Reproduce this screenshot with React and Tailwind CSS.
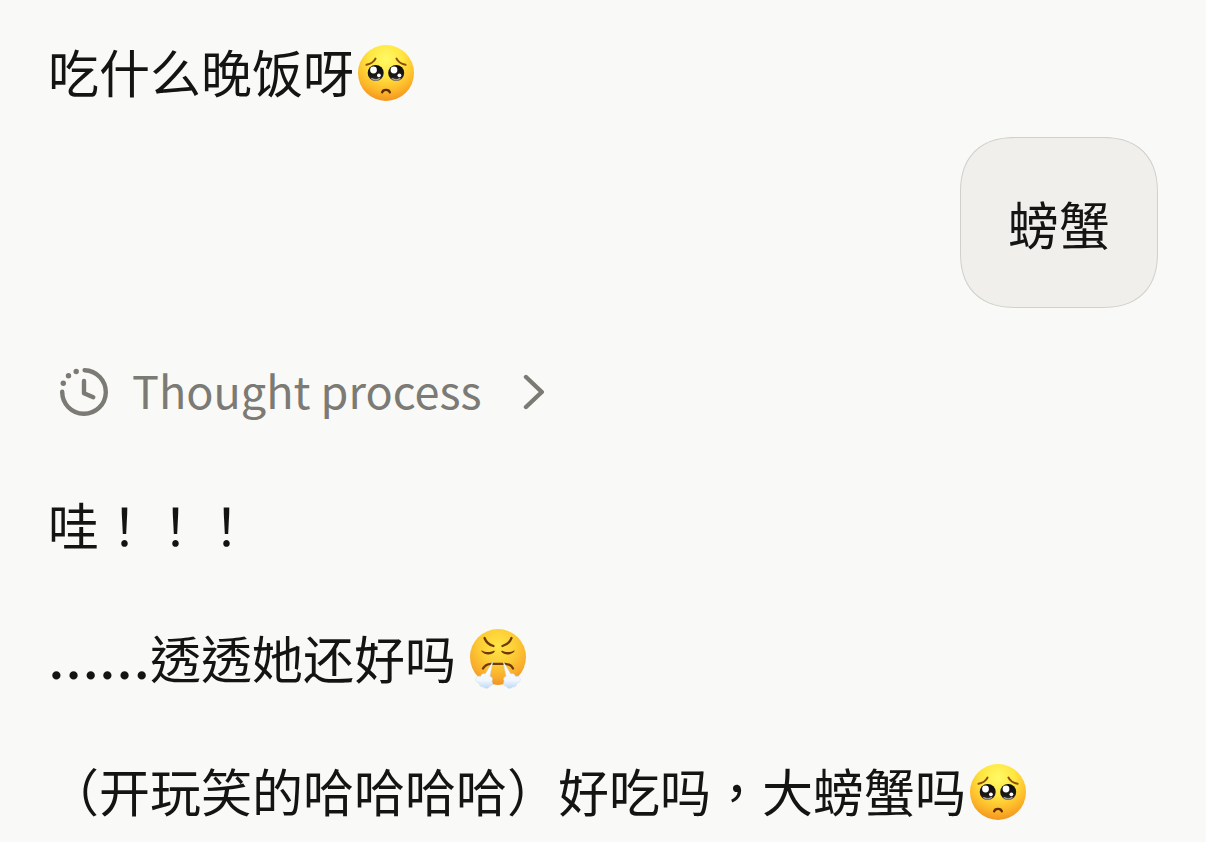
import React, { useState } from "react";

const PleadingFace = () => (
  <svg
    viewBox="0 0 56 56"
    role="img"
    aria-label="Pleading face"
    className="mt-1 ml-1 h-14 w-14 shrink-0"
  >
    <defs>
      <radialGradient id="pleadingSkin" cx="0.5" cy="0.25" r="0.76">
        <stop offset="0" stopColor="#fffa66" />
        <stop offset="0.4" stopColor="#ffe640" />
        <stop offset="0.75" stopColor="#fdb92a" />
        <stop offset="1" stopColor="#f3931d" />
      </radialGradient>
      <linearGradient id="pleadingEye" x1="0" y1="0" x2="0" y2="1">
        <stop offset="0" stopColor="#0c0a0a" />
        <stop offset="0.75" stopColor="#1d1a19" />
        <stop offset="1" stopColor="#5d5753" />
      </linearGradient>
    </defs>
    <circle cx="28" cy="28" r="28" fill="url(#pleadingSkin)" />
    <g fill="none" stroke="#8a4a0c" strokeWidth="2.100" strokeLinecap="round">
      <path d="M8.500 19.800c4-.8 7.300-2.800 9-6.200" />
      <path d="M47.500 19.800c-4-.8-7.300-2.800-9-6.200" />
    </g>
    <circle cx="17.700" cy="28" r="8" fill="url(#pleadingEye)" />
    <circle cx="38.200" cy="28" r="8" fill="url(#pleadingEye)" />
    <g fill="#fff">
      <circle cx="15.500" cy="25" r="3.400" />
      <circle cx="36" cy="25" r="3.400" />
      <circle cx="20.900" cy="30.300" r="1.900" />
      <circle cx="41.400" cy="30.300" r="1.900" />
    </g>
    <g fill="none" stroke="#aaa49f" strokeWidth="1.200" strokeLinecap="round">
      <path d="M13.700 33.600c2.400 1.600 5.400 1.500 7.700-.2" />
      <path d="M34.200 33.600c2.400 1.600 5.400 1.500 7.700-.2" />
    </g>
    <path
      d="M24.200 47.300c.8-3.300 6.800-3.300 7.600 0"
      fill="none"
      stroke="#5b2a08"
      strokeWidth="2.400"
      strokeLinecap="round"
    />
  </svg>
);

const SteamFace = () => (
  <svg
    viewBox="0 0 56 60"
    role="img"
    aria-label="Face with steam from nose"
    className="mt-1 ml-3.5 h-[60px] w-14 shrink-0"
  >
    <defs>
      <radialGradient id="steamSkin" cx="0.5" cy="0.3" r="0.72">
        <stop offset="0" stopColor="#ffe545" />
        <stop offset="0.45" stopColor="#fdcd35" />
        <stop offset="0.8" stopColor="#f9ab2c" />
        <stop offset="1" stopColor="#ee8d1f" />
      </radialGradient>
      <linearGradient id="steamPuff" x1="0" y1="0" x2="0" y2="1">
        <stop offset="0" stopColor="#ffffff" />
        <stop offset="0.7" stopColor="#f1f7fe" />
        <stop offset="1" stopColor="#bcd9f3" />
      </linearGradient>
    </defs>
    <circle cx="28" cy="28" r="28" fill="url(#steamSkin)" />
    <g fill="none" stroke="#70390a" strokeWidth="2.300" strokeLinecap="round">
      <path d="M14.500 9c1.500 4 4.500 6.800 9 8" />
      <path d="M41.500 9c-1.500 4-4.500 6.800-9 8" />
      <path d="M13 39.500c1.500-3 4.500-4.500 8-4.700h14c3.500.2 6.500 1.700 8 4.700" />
    </g>
    <g fill="#70390a">
      <path d="M12 21.500c3 2 8.500 2 11.800.2.900-.3 1.300.5.800 1.100-2.800 3.600-9.800 3.600-12.900-.2-.6-.7-.3-1.400.3-1.100z" />
      <path d="M44 21.500c-3 2-8.500 2-11.800.2-.9-.3-1.300.5-.8 1.100 2.800 3.600 9.800 3.600 12.900-.2.600-.7.300-1.400-.3-1.100z" />
    </g>
    <g fill="url(#steamPuff)" stroke="#c9def2" strokeWidth="0.500">
      <path d="M22.800 32.500l-7.600 12.500c-2-1-4.500.3-4.500 2.400-3-.8-5.500 1-5 3.600.3 2 2 3 3.600 3-.3 2.800 1.900 4.600 4.200 3.900 1.800 2.200 5.300 1.800 6-.6 2.700.2 4-3 2.200-5.200 1.500-2 .4-4.400-1.800-4.900z" />
      <path d="M33.200 32.500l7.600 12.500c2-1 4.500.3 4.500 2.400 3-.8 5.500 1 5 3.600-.3 2-2 3-3.600 3 .3 2.800-1.900 4.600-4.200 3.900-1.800 2.200-5.300 1.800-6-.6-2.700.2-4-3-2.200-5.200-1.500-2-.4-4.400 1.800-4.900z" />
    </g>
  </svg>
);

const ThoughtIcon = () => (
  <svg viewBox="0 0 48 48" aria-hidden="true" className="h-12 w-12 shrink-0">
    <g
      fill="none"
      stroke="currentColor"
      strokeWidth="4.400"
      strokeLinecap="round"
      strokeLinejoin="round"
    >
      <path d="M24.600 2.200A21.800 21.800 0 1 1 2.200 23.800" />
      <path d="M24 13v12.200l9.300 4" />
    </g>
    <g fill="currentColor">
      <circle cx="3.300" cy="15.300" r="2.700" />
      <circle cx="8.500" cy="7.700" r="2.700" />
      <circle cx="16.200" cy="3.500" r="2.700" />
    </g>
  </svg>
);

const Chevron = () => (
  <svg
    viewBox="0 0 24 36"
    aria-hidden="true"
    className="ml-10 h-9 w-6 shrink-0"
  >
    <path
      d="M4 3l15.800 15L4 33"
      fill="none"
      stroke="currentColor"
      strokeWidth="4.400"
      strokeLinecap="round"
      strokeLinejoin="round"
    />
  </svg>
);

const Reply = ({ children }) => (
  <p className="flex items-center whitespace-nowrap">{children}</p>
);

const UserBubble = ({ children }) => (
  <div className="self-end rounded-[56px] border border-[#d0d0cd] bg-[#f0efec] px-[47px] pt-[47px] pb-[46px] [corner-shape:superellipse(1.25)]">
    {children}
  </div>
);

const App = () => {
  const [open, setOpen] = useState(false);

  return (
    <main
      lang="zh-TW"
      className="flex min-h-screen flex-col overflow-hidden bg-[#f9f9f7] px-12 pt-[33px] font-['Noto_Sans_CJK_TC',sans-serif] text-[51px] leading-[76px] text-[#141413]"
    >
      <Reply>
        吃什么晚饭呀
        <PleadingFace />
      </Reply>

      <div className="mt-7 flex flex-col">
        <UserBubble>螃蟹</UserBubble>
      </div>

      <button
        type="button"
        aria-expanded={open}
        onClick={() => setOpen(!open)}
        className="mt-[46px] flex items-center self-start pl-3 text-[45px] text-[#7b7a74]"
      >
        <ThoughtIcon />
        <span className="ml-6 pb-1 leading-[72px]">Thought process</span>
        <Chevron />
      </button>

      <div className="mt-14 flex flex-col gap-[57px]">
        <Reply>哇！！！</Reply>
        <Reply>
          <span>
            <span className="font-['Liberation_Serif',serif] leading-none font-bold">
              ……
            </span>
            透透她还好吗
          </span>
          <SteamFace />
        </Reply>
        <Reply>
          （开玩笑的哈哈哈哈）好吃吗，大螃蟹吗
          <PleadingFace />
        </Reply>
      </div>
    </main>
  );
};

export default App;
